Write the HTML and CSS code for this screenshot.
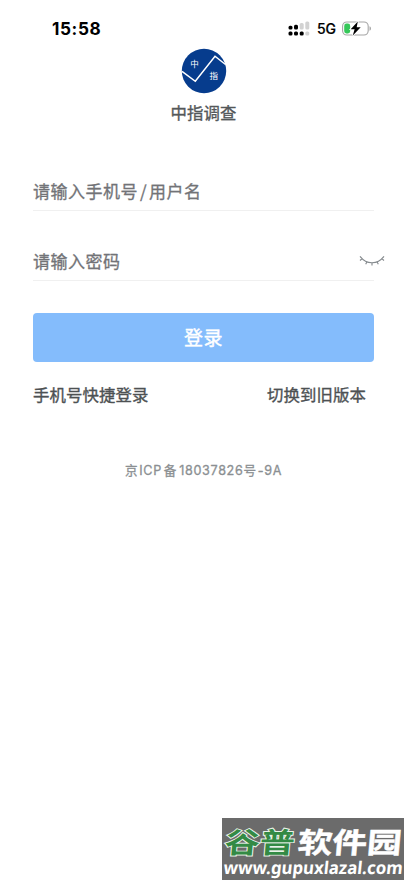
FILE: index.html
```html
<!DOCTYPE html>
<html lang="zh-CN">
<head>
<meta charset="utf-8">
<meta name="viewport" content="width=device-width">
<title>中指调查</title>
<link rel="stylesheet" href="styles.css">
</head>
<body>
<div class="screen">
  <header class="status">
    <span class="time">15:58</span>
    <div class="indicators">
      <svg class="signal" width="22" height="15" viewBox="0 0 22 15">
        <g fill="#000"><rect x="0.5" y="4.7" width="4" height="3.8" rx="1.5"/><rect x="6" y="3.8" width="4" height="4.7" rx="1.5"/><rect x="0.5" y="10.6" width="4" height="3.8" rx="1.5"/><rect x="6" y="10.6" width="4" height="3.8" rx="1.5"/><rect x="11.7" y="10.6" width="4" height="3.8" rx="1.5"/></g>
        <g fill="#d2d2d2"><rect x="11.7" y="2" width="4" height="6.5" rx="1.5"/><rect x="17.3" y="0.6" width="4" height="7.9" rx="1.5"/><rect x="17.3" y="10.6" width="4" height="3.8" rx="1.5"/></g>
      </svg>
      <span class="network">5G</span>
      <svg class="battery" width="30" height="15" viewBox="0 0 30 15">
        <rect x=".6" y="1" width="25.6" height="13" rx="4.2" fill="#fff" stroke="#a5a5a5" stroke-width="1.1"/>
        <path d="M27.5 5.3Q29 5.6 29 7.5T27.5 9.7Z" fill="#a5a5a5"/>
        <rect x="2.2" y="2.6" width="6" height="9.8" rx="2.3" fill="#35c759"/>
        <path d="M15.8.6 8.7 8.3h3.9L10.8 14.4l7.9-8.1h-4Z" fill="#000" stroke="#fff" stroke-width="1.6" paint-order="stroke"/>
      </svg>
    </div>
  </header>
  <main class="login">
    <svg class="logo" width="46" height="46" viewBox="0 0 46 46">
      <circle cx="23" cy="23" r="22.2" fill="#063c8d"/>
      <path d="M1 23.3 14.3 33.3 34 8.2 44.5 16.5" fill="none" stroke="#fff" stroke-width="1.5"/>
      <text class="logo-text" x="9.2" y="18.8">中</text>
      <text class="logo-text" x="28.6" y="30.5">指</text>
    </svg>
    <h1 class="title">中指调查</h1>
    <div class="field account"><span>请输入手机号<span class="slash">/</span>用户名</span></div>
    <div class="field password"><span>请输入密码</span>
      <svg class="eye" width="26" height="13" viewBox="0 0 26 13" fill="none" stroke="#858a8e" stroke-width="1.15">
        <path d="M1 2.3Q6 8.7 13 8.7T25 2.3M3.2 4.6 1 6.5M8 7.7 6.7 10.2M13 8.7V11.5M18 7.7l1.3 2.5M22.8 4.6 25 6.5"/>
      </svg>
    </div>
    <div class="submit"><span>登录</span></div>
    <nav class="links"><span>手机号快捷登录</span><span>切换到旧版本</span></nav>
    <p class="record">京<span class="latin">ICP</span><span class="bei">备</span><span class="latin">18037826</span>号<span class="latin">-9A</span></p>
  </main>
  <svg class="watermark" width="182" height="62" viewBox="0 0 182 62">
    <rect width="182" height="62" fill="#6b6b6b"/>
    <g class="brand" transform="translate(2 0) skewX(-5) scale(1 .92)">
      <text class="green" x="3" y="38.5" textLength="70" lengthAdjust="spacingAndGlyphs">谷普</text>
      <text class="white" x="76" y="38.5" textLength="104" lengthAdjust="spacingAndGlyphs">软件园</text>
    </g>
    <g transform="translate(5 0) skewX(-6)">
      <text class="url" x="2" y="56" textLength="179" lengthAdjust="spacingAndGlyphs">www.gupuxlazal.com</text>
    </g>
  </svg>
</div>
</body>
</html>
```
FILE: styles.css
```css
* { box-sizing: border-box; }
body { margin: 0; background: #fff; font-family: "Inter", "Noto Sans CJK SC", sans-serif; }
.screen { position: relative; width: 407px; height: 883px; overflow: hidden; background: #fff; }
.status { height: 48px; padding: 18px 35px 0 52px; display: flex; justify-content: space-between; align-items: flex-start; }
.time { font-size: 17.2px; line-height: 21px; font-weight: 700; letter-spacing: .6px; color: #000; }
.indicators { display: flex; align-items: center; height: 20px; }
.network { margin: 1px 6px 0 7px; font-size: 14px; line-height: 20px; font-weight: 500; color: #000; -webkit-text-stroke: .2px #000; }
.login { padding: 0 33px; display: flex; flex-direction: column; }
.logo { align-self: center; display: block; }
.logo-text { font: 400 8.5px "Noto Sans CJK SC", sans-serif; fill: #fff; }
.title { align-self: center; margin: 6px 0 1px; font: 400 16.4px/24px "Noto Sans CJK SC", sans-serif; color: #54585a; -webkit-text-stroke: .35px #54585a; letter-spacing: .1px; }
.field { position: relative; display: flex; align-items: center; justify-content: space-between; width: 341px; border-bottom: 1px solid #f0f0f0; font: 400 17px/24px "Noto Sans CJK SC", sans-serif; color: #727377; -webkit-text-stroke: .3px #727377; letter-spacing: .5px; }
.account { margin-top: 46px; height: 40px; }
.slash { margin: 0 1.8px 0 2px; }
.password { margin-top: 30px; height: 40px; }
.eye { margin-right: -11px; }
.submit { width: 341px; height: 49px; margin-top: 32px; padding-bottom: 1px; border-radius: 4px; background: #84bcfc; display: flex; align-items: center; justify-content: center; font: 400 19px/28px "Noto Sans CJK SC", sans-serif; letter-spacing: .6px; color: #fff; -webkit-text-stroke: .4px #fff; }
.links { display: flex; justify-content: space-between; margin-top: 20px; padding-right: 8px; font: 400 16.4px/24px "Noto Sans CJK SC", sans-serif; color: #4d5153; -webkit-text-stroke: .35px #4d5153; letter-spacing: .1px; }
.record { align-self: center; margin: 54px 0 0; font: 400 12.6px/20px "Noto Sans CJK SC", sans-serif; color: #8b8f92; -webkit-text-stroke: .3px #8b8f92; letter-spacing: .68px; white-space: nowrap; }
.latin { font-family: "Inter", sans-serif; margin-left: 1px; }
.bei { margin: 0 1px 0 2px; }
.watermark { position: absolute; left: 222px; top: 818px; }
.brand { font: 700 31px "Noto Sans CJK SC", sans-serif; }
.green { fill: #338a45; stroke: #e9f3e9; stroke-width: 2px; paint-order: stroke; }
.white { fill: #fff; stroke: #fff; stroke-width: .5px; }
.url { font: 700 17.5px "Noto Sans", sans-serif; fill: #fff; }
```
